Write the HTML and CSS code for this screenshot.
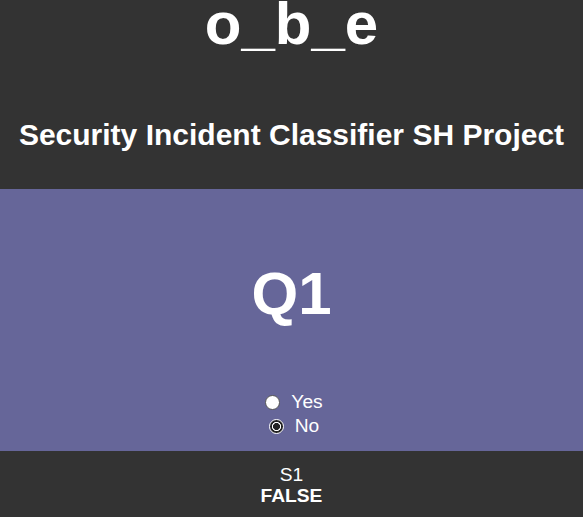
FILE: index.html
```html
<!DOCTYPE html>
<html lang="en">
<head>
<meta charset="utf-8">
<title>o_b_e</title>
<link rel="stylesheet" href="styles.css">
</head>
<body>
<header class="top">
  <h1 class="brand">o_b_e</h1>
  <h2 class="subtitle">Security Incident Classifier SH Project</h2>
</header>
<main class="question">
  <h1 class="qtitle">Q1</h1>
  <form class="answers">
    <label class="choice"><input type="radio" name="q1" value="yes" class="radio"><span>Yes</span></label>
    <label class="choice"><input type="radio" name="q1" value="no" class="radio" checked><span>No</span></label>
  </form>
</main>
<footer class="status">
  <div class="status-name">S1</div>
  <div class="status-value">FALSE</div>
</footer>
</body>
</html>
```
FILE: styles.css
```css
html, body {
  margin: 0;
  padding: 0;
}
body {
  font-family: "Liberation Sans", Arial, sans-serif;
  color: #fff;
  background: #333333;
}
.top {
  background: #333333;
  height: 189px;
  box-sizing: border-box;
  text-align: center;
  overflow: hidden;
}
.brand {
  margin: 0;
  font-size: 60px;
  font-weight: bold;
  line-height: 48px;
}
.subtitle {
  margin: 70px 0 0;
  font-size: 30px;
  font-weight: bold;
  line-height: 34px;
}
.question {
  background: #666699;
  height: 262px;
  box-sizing: border-box;
  padding-top: 70px;
  text-align: center;
}
.qtitle {
  margin: 0;
  font-size: 60px;
  font-weight: bold;
  line-height: 69px;
}
.answers {
  margin-top: 62px;
  display: flex;
  flex-direction: column;
  align-items: center;
  font-size: 19.2px;
  line-height: 24px;
}
.choice {
  display: flex;
  align-items: center;
  gap: 11px;
  padding-left: 5px;
}
.choice span {
  display: block;
}
.radio {
  appearance: none;
  -webkit-appearance: none;
  flex-shrink: 0;
  margin: 1px 0 0;
  width: 15px;
  height: 15px;
  border-radius: 50%;
  background: #fff;
  border: 1px solid #555;
  box-sizing: border-box;
}
.radio:checked {
  border: 1px solid #fff;
  background: radial-gradient(circle, #222 0 3.2px, #fff 3.8px 4.3px, #222 4.9px);
}
.status {
  background: #333333;
  padding-top: 13px;
  text-align: center;
  font-size: 19.2px;
  line-height: 21px;
  height: 66px;
  box-sizing: border-box;
}
.status-value {
  font-weight: bold;
}
```
